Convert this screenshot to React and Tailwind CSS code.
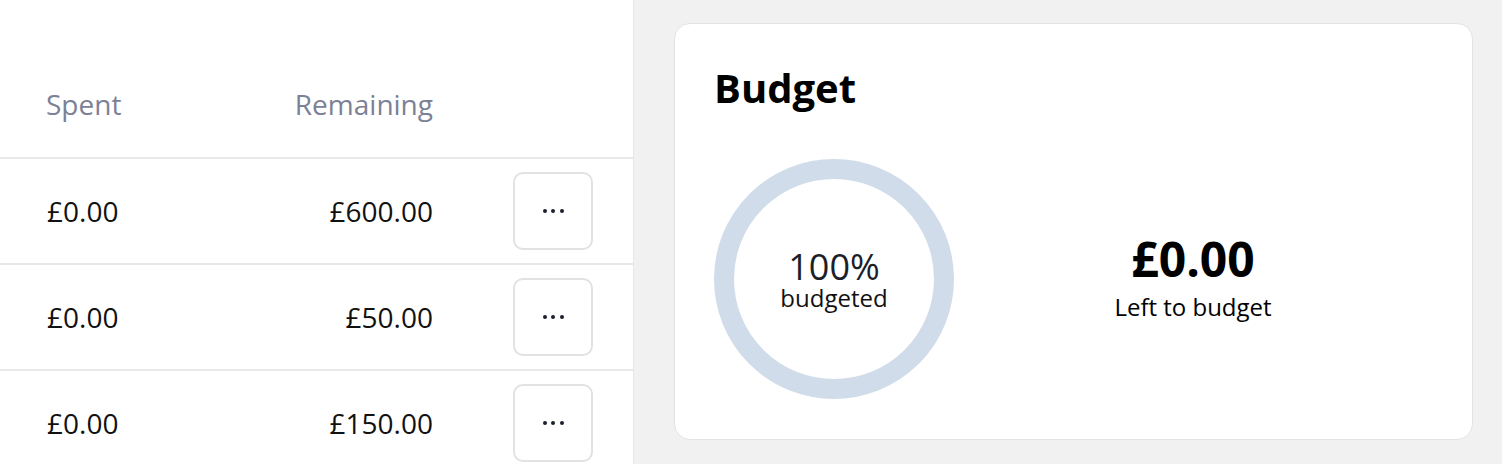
import React from "react";

const rows = [
  { spent: "£0.00", remaining: "£600.00" },
  { spent: "£0.00", remaining: "£50.00" },
  { spent: "£0.00", remaining: "£150.00" },
];

function DotsButton() {
  return (
    <button className="w-[80px] h-[78px] shrink-0 rounded-[10px] border-2 border-[#e2e2e2] bg-white flex items-center justify-center gap-[4.5px]">
      <span className="w-[4px] h-[4px] rounded-full bg-[#1b1f2e]" />
      <span className="w-[4px] h-[4px] rounded-full bg-[#1b1f2e]" />
      <span className="w-[4px] h-[4px] rounded-full bg-[#1b1f2e]" />
    </button>
  );
}

export default function App() {
  return (
    <div
      className="flex w-[1502px] h-[464px] overflow-hidden bg-[#f1f1f1]"
      style={{ fontFamily: '"Open Sans", sans-serif' }}
    >
      {/* Table */}
      <div className="w-[634px] shrink-0 bg-white border-r border-[#e6e6e6]">
        <div className="h-[157px] flex items-end pl-[46px] pr-[40px] pb-[32px] text-[28px] text-[#7c8196]">
          <div className="w-[150px]">Spent</div>
          <div className="flex-1 text-right">Remaining</div>
          <div className="w-[160px] shrink-0" />
        </div>
        {rows.map((row, i) => (
          <div
            key={i}
            className="h-[106px] border-t-2 border-[#e8e8e8] flex items-start pl-[47px] pr-[40px] pt-[13px] text-[28px] text-[#111]"
          >
            <div className="w-[149px] h-[78px] flex items-center">{row.spent}</div>
            <div className="flex-1 h-[78px] flex items-center justify-end">{row.remaining}</div>
            <div className="w-[80px] shrink-0" />
            <DotsButton />
          </div>
        ))}
      </div>

      {/* Budget card */}
      <div className="flex-1 pl-[40px] pr-[29px] pt-[23px]">
        <div className="h-[417px] bg-white rounded-[16px] border border-[#e3e3e3] pl-[39px] pr-[40px] pt-[40px]">
          <h2 className="text-[40px] font-bold leading-[48px] text-black">Budget</h2>
          <div className="mt-[47px] flex items-center">
            <div className="w-[240px] h-[240px] rounded-full border-[20px] border-[#d0dce9] flex flex-col items-center justify-center text-[#1c1f2a]">
              <div className="text-[36px] leading-[38px]">100%</div>
              <div className="text-[24px] leading-[24px] text-[#111]">budgeted</div>
            </div>
            <div className="flex-1 flex flex-col items-center text-black">
              <div className="text-[48px] font-bold leading-[56px]">£0.00</div>
              <div className="text-[24px] leading-[40px]">Left to budget</div>
            </div>
          </div>
        </div>
      </div>
    </div>
  );
}
